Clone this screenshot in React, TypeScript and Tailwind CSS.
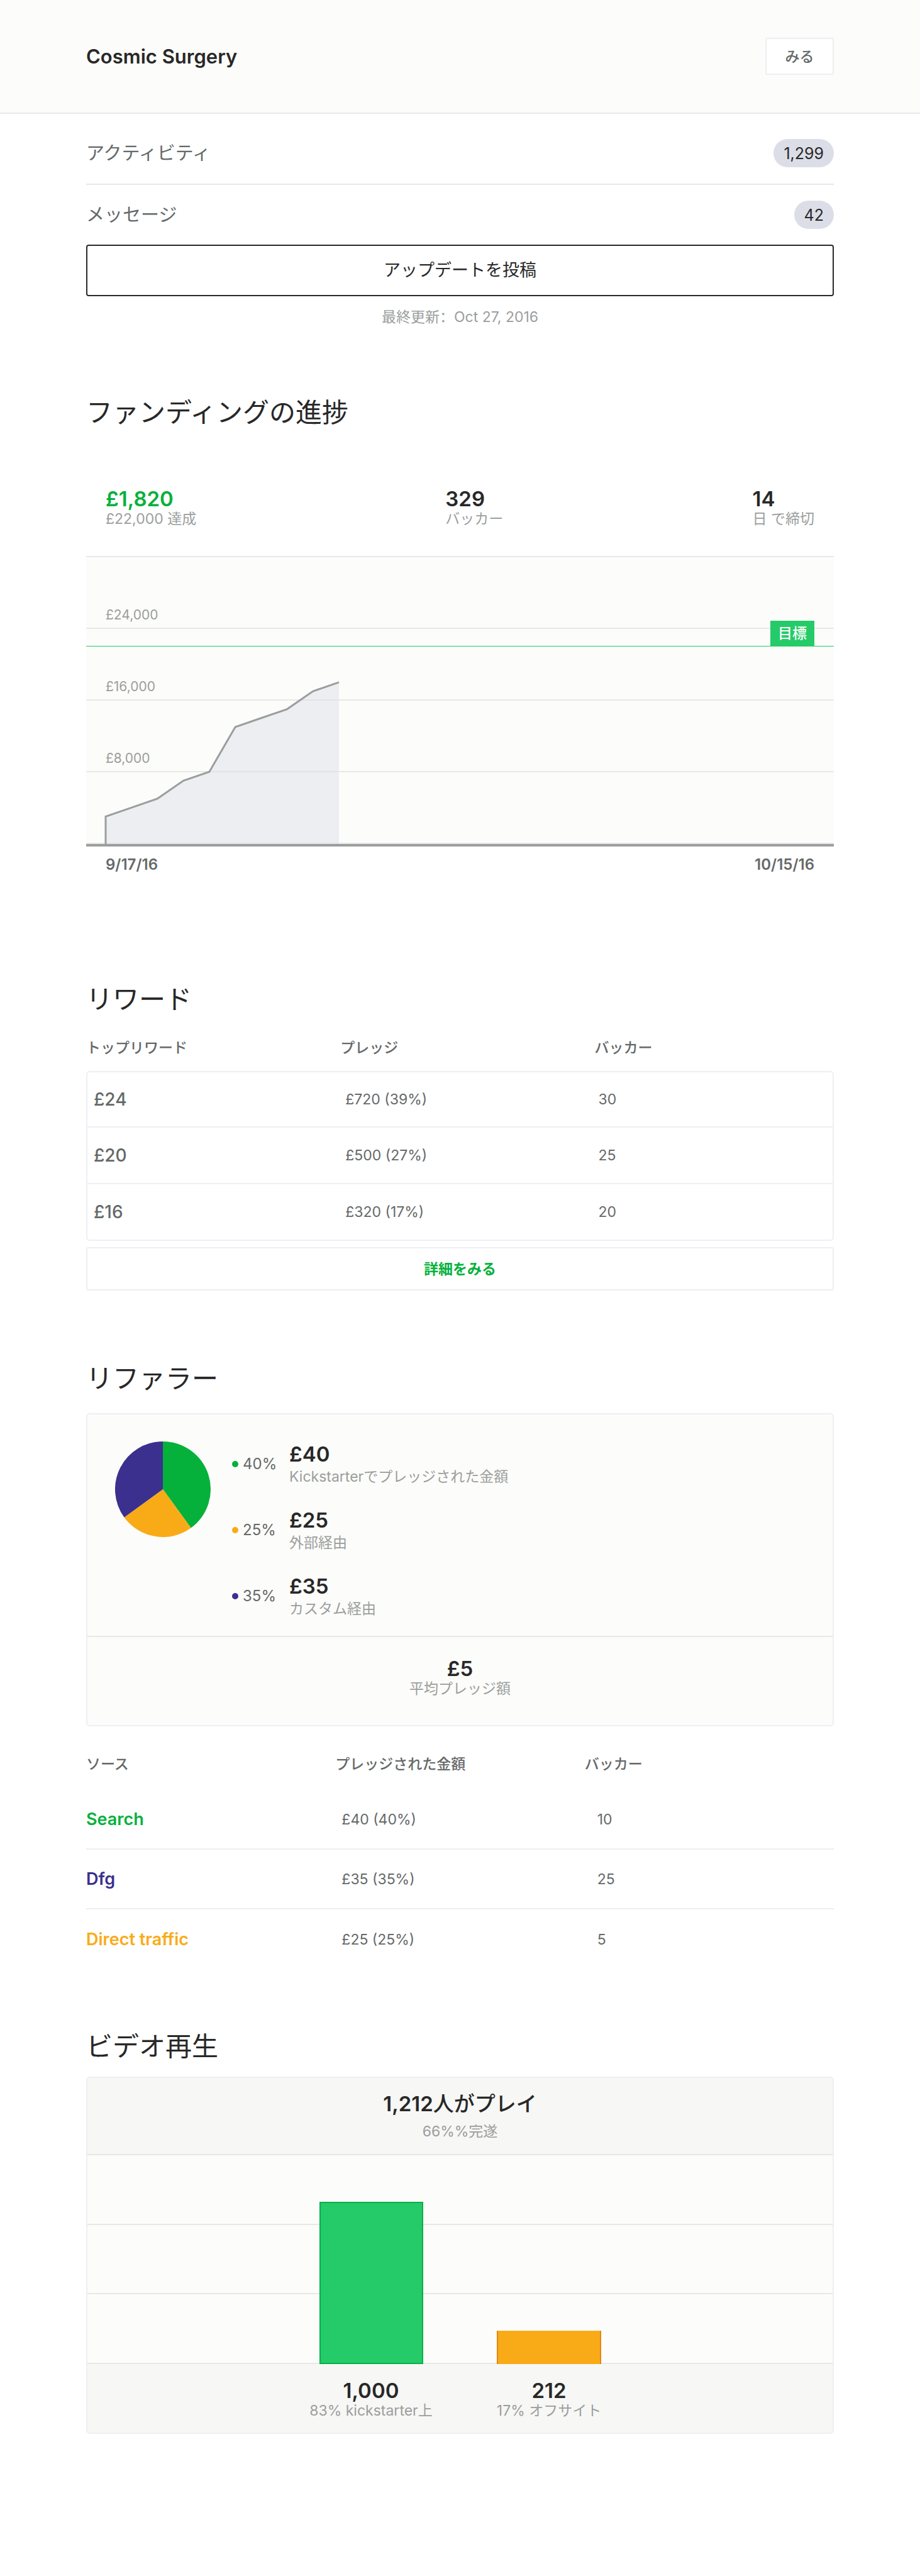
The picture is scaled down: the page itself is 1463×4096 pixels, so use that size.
type Tone = 'green' | 'orange' | 'purple';

const textTone: Record<Tone, string> = {
  green: 'text-[#05b13b]',
  orange: 'text-[#f9ab17]',
  purple: 'text-[#3b308e]',
};

const dotTone: Record<Tone, string> = {
  green: 'bg-[#05b13b]',
  orange: 'bg-[#f9ab17]',
  purple: 'bg-[#3b308e]',
};

const funding = [3, 4, 5, 7, 8, 13, 14, 15, 17, 18];

const rewards = [
  { tier: '£24', pledged: '£720 (39%)', backers: '30' },
  { tier: '£20', pledged: '£500 (27%)', backers: '25' },
  { tier: '£16', pledged: '£320 (17%)', backers: '20' },
];

const referrers: { percent: string; amount: string; label: string; tone: Tone }[] = [
  { percent: '40%', amount: '£40', label: 'Kickstarterでプレッジされた金額', tone: 'green' },
  { percent: '25%', amount: '£25', label: '外部経由', tone: 'orange' },
  { percent: '35%', amount: '£35', label: 'カスタム経由', tone: 'purple' },
];

const sources: { name: string; pledged: string; backers: string; tone: Tone }[] = [
  { name: 'Search', pledged: '£40 (40%)', backers: '10', tone: 'green' },
  { name: 'Dfg', pledged: '£35 (35%)', backers: '25', tone: 'purple' },
  { name: 'Direct traffic', pledged: '£25 (25%)', backers: '5', tone: 'orange' },
];

function Stat({ value, label, valueClass = 'text-[#282828]' }: { value: string; label: string; valueClass?: string }) {
  return (
    <div>
      <div className={`text-[33px] leading-9 font-semibold ${valueClass}`}>{value}</div>
      <div className="text-[23px] leading-7 text-[#9b9e9e]">{label}</div>
    </div>
  );
}

function CountRow({ label, count, className }: { label: string; count: string; className: string }) {
  return (
    <a href="#" className={`flex items-center justify-between ${className}`}>
      <span className="text-[29px] leading-10 text-[#656969]">{label}</span>
      <span className="flex h-[45px] items-center rounded-full bg-[#dcdee7] px-4 text-[25px] leading-8 text-[#282828]">
        {count}
      </span>
    </a>
  );
}

function Heading({ children, className }: { children: string; className: string }) {
  return <h2 className={`text-[42px] leading-14 font-normal text-[#282828] ${className}`}>{children}</h2>;
}

function FundingChart() {
  const points = funding.map((v, i) => `${31 + (i * 371) / 9},${455 - v * 14.23}`).join(' ');
  return (
    <div className="relative border-t-2 border-b-4 border-t-[#e8e8e7] border-b-[#9b9e9e] bg-[#fcfcfa]">
      {['£24,000', '£16,000', '£8,000', ''].map((label, i) => (
        <div key={i} className="flex h-[114px] items-end border-b-2 border-[#e8e8e7] px-[31px] pb-1.5">
          <span className="text-[21px] leading-7 text-[#9b9e9e]">{label}</span>
        </div>
      ))}
      <svg className="absolute inset-0 h-full w-full" viewBox="0 0 1189 456" preserveAspectRatio="none">
        <polygon points={`31,456 ${points} 402,456`} fill="#dcdee7" fillOpacity="0.45" />
        <polyline
          points={`31,456 ${points}`}
          fill="none"
          stroke="#9b9e9e"
          strokeWidth="3"
          vectorEffect="non-scaling-stroke"
        />
      </svg>
      <div className="absolute inset-x-0 top-[101px] flex justify-end border-b border-[#25cb68] pr-[31px]">
        <span className="flex h-10 w-[70px] items-center justify-center bg-[#25cb68] text-[23px] leading-8 font-medium text-white">
          目標
        </span>
      </div>
    </div>
  );
}

function Pie() {
  return (
    <svg className="size-[152px] shrink-0" viewBox="-76 -76 152 152" role="img" aria-label="リファラー">
      <path d="M0 0 L0 -76 A76 76 0 0 1 44.67 61.49 Z" fill="#05b13b" />
      <path d="M0 0 L44.67 61.49 A76 76 0 0 1 -61.49 44.67 Z" fill="#f9ab17" />
      <path d="M0 0 L-61.49 44.67 A76 76 0 0 1 0 -76 Z" fill="#3b308e" />
    </svg>
  );
}

export default function App() {
  return (
    <div lang="ja" className="bg-white pb-56 font-['Inter','Noto_Sans_CJK_JP',sans-serif] text-[#282828]">
      <header className="flex h-[181px] items-center justify-between border-b-2 border-[#e8e8e7] bg-[#fcfcfa] px-[137px]">
        <h1 className="text-[31px] leading-10 font-semibold">Cosmic Surgery</h1>
        <button className="h-[59px] w-[109px] rounded-[3px] border-2 border-[#eeeff3] bg-white text-[23px] leading-8 font-medium text-[#656969]">
          みる
        </button>
      </header>

      <main className="px-[137px] pt-3.5">
        <CountRow label="アクティビティ" count="1,299" className="h-[99px] border-b-2 border-[#e8e8e7]" />
        <CountRow label="メッセージ" count="42" className="h-[95px]" />
        <button className="h-[82px] w-full rounded-[4px] border-2 border-[#282828] text-[27px] leading-10">
          アップデートを投稿
        </button>
        <p className="mt-[17px] text-center text-[23px] leading-8 text-[#9b9e9e]">
          最終更新
          <span lang="zh-CN" className="font-['Noto_Sans_CJK_SC',sans-serif] leading-none">
            ：
          </span>
          Oct 27, 2016
        </p>

        <section>
          <Heading className="mt-[108px]">ファンディングの進捗</Heading>
          <div className="mt-[91px] mb-[45px] flex justify-between px-[31px]">
            <Stat value="£1,820" label="£22,000 達成" valueClass="text-[#05b13b]" />
            <Stat value="329" label="バッカー" />
            <Stat value="14" label="日 で締切" />
          </div>
          <FundingChart />
          <div className="mt-[13px] flex justify-between px-[31px] text-[24px] leading-8 font-semibold text-[#656969]">
            <span>9/17/16</span>
            <span>10/15/16</span>
          </div>
        </section>

        <section>
          <Heading className="mt-[170px]">リワード</Heading>
          <table className="mt-[11px] w-full table-fixed border-separate border-spacing-0 text-left text-[#656969]">
            <thead>
              <tr className="h-[75px] text-[23px] leading-8">
                <th className="w-[34%] p-0 font-medium">トップリワード</th>
                <th className="w-[34%] p-0 font-medium">プレッジ</th>
                <th className="p-0 font-medium">バッカー</th>
              </tr>
            </thead>
            <tbody className="[&_td]:border-b-2 [&_td]:border-[#eeeff3] [&_td:first-child]:border-l-2 [&_td:last-child]:border-r-2 [&_tr:first-child_td]:border-t-2 [&_tr:first-child_td:first-child]:rounded-tl-[6px] [&_tr:first-child_td:last-child]:rounded-tr-[6px] [&_tr:last-child_td:first-child]:rounded-bl-[6px] [&_tr:last-child_td:last-child]:rounded-br-[6px]">
              {rewards.map((r) => (
                <tr key={r.tier} className="h-[90px] text-[23px] leading-8">
                  <td className="py-0 pl-2.5 text-[28px] font-medium">{r.tier}</td>
                  <td className="py-0 pl-2">{r.pledged}</td>
                  <td className="py-0 pl-1.5">{r.backers}</td>
                </tr>
              ))}
            </tbody>
          </table>
          <button className="mt-2.5 h-[69px] w-full rounded-[3px] border-2 border-[#eeeff3] text-[23px] leading-8 font-bold text-[#05b13b]">
            詳細をみる
          </button>
        </section>

        <section>
          <Heading className="mt-28">リファラー</Heading>
          <div className="mt-[27px] rounded-[6px] border-2 border-[#eeeff3] bg-[#fcfcfa]">
            <div className="flex border-b-2 border-[#e8e8e7] px-11 pt-[43px] pb-[29px]">
              <Pie />
              <ul className="ml-[34px] flex flex-col gap-[37px] pt-0.5">
                {referrers.map((r) => (
                  <li key={r.percent} className="flex items-center">
                    <span className={`size-2.5 rounded-full ${dotTone[r.tone]}`} />
                    <span className="ml-[7px] w-[74px] text-[24px] leading-8 text-[#656969]">{r.percent}</span>
                    <div>
                      <div className="text-[33px] leading-9 font-semibold">{r.amount}</div>
                      <div className="mt-1 text-[23px] leading-7 text-[#9b9e9e]">{r.label}</div>
                    </div>
                  </li>
                ))}
              </ul>
            </div>
            <div className="pt-8 pb-11 text-center">
              <Stat value="£5" label="平均プレッジ額" />
            </div>
          </div>

          <table className="mt-[19px] w-full table-fixed border-separate border-spacing-0 text-left text-[#656969]">
            <thead>
              <tr className="h-[82px] text-[23px] leading-8">
                <th className="p-0 font-medium">ソース</th>
                <th className="p-0 font-medium">プレッジされた金額</th>
                <th className="p-0 font-medium">バッカー</th>
              </tr>
            </thead>
            <tbody className="[&_tr:not(:last-child)_td]:border-b-2 [&_td]:border-[#eeeff3]">
              {sources.map((s) => (
                <tr key={s.name} className="h-[95px] text-[23px] leading-8">
                  <td className={`p-0 text-[27px] font-semibold ${textTone[s.tone]}`}>{s.name}</td>
                  <td className="py-0 pl-2.5">{s.pledged}</td>
                  <td className="py-0 pl-5">{s.backers}</td>
                </tr>
              ))}
            </tbody>
          </table>
        </section>

        <section>
          <Heading className="mt-[95px]">ビデオ再生</Heading>
          <div className="mt-5 overflow-hidden rounded-[6px] border-2 border-[#eeeff3] bg-[#f7f7f5]">
            <div className="border-b-2 border-[#e8e8e7] pt-[21px] pb-[22px] text-center">
              <div className="text-[33px] leading-10 font-semibold">
                1,212<span className="font-medium">人がプレイ</span>
              </div>
              <div className="mt-2.5 text-[23px] leading-7 text-[#9b9e9e]">66%%完遂</div>
            </div>
            <div className="relative flex h-[332px] flex-col bg-[#fcfcfa]">
              <div className="flex-1 border-b-2 border-[#e8e8e7]" />
              <div className="flex-1 border-b-2 border-[#e8e8e7]" />
              <div className="flex-1 border-b-2 border-[#e8e8e7]" />
              <div className="absolute inset-0 flex items-end justify-center">
                <div className="flex w-[283px] justify-center">
                  <div className="h-[258px] w-[165px] border-2 border-[#06b048] bg-[#25cb68]" />
                </div>
                <div className="flex w-[283px] justify-center">
                  <div className="h-[53px] w-[166px] border-x-2 border-[#e3860f] bg-[#f9ab17]" />
                </div>
              </div>
            </div>
            <div className="flex justify-center pt-6 pb-[21px] text-center">
              <div className="w-[283px]">
                <Stat value="1,000" label="83% kickstarter上" />
              </div>
              <div className="w-[283px]">
                <Stat value="212" label="17% オフサイト" />
              </div>
            </div>
          </div>
        </section>
      </main>
    </div>
  );
}
